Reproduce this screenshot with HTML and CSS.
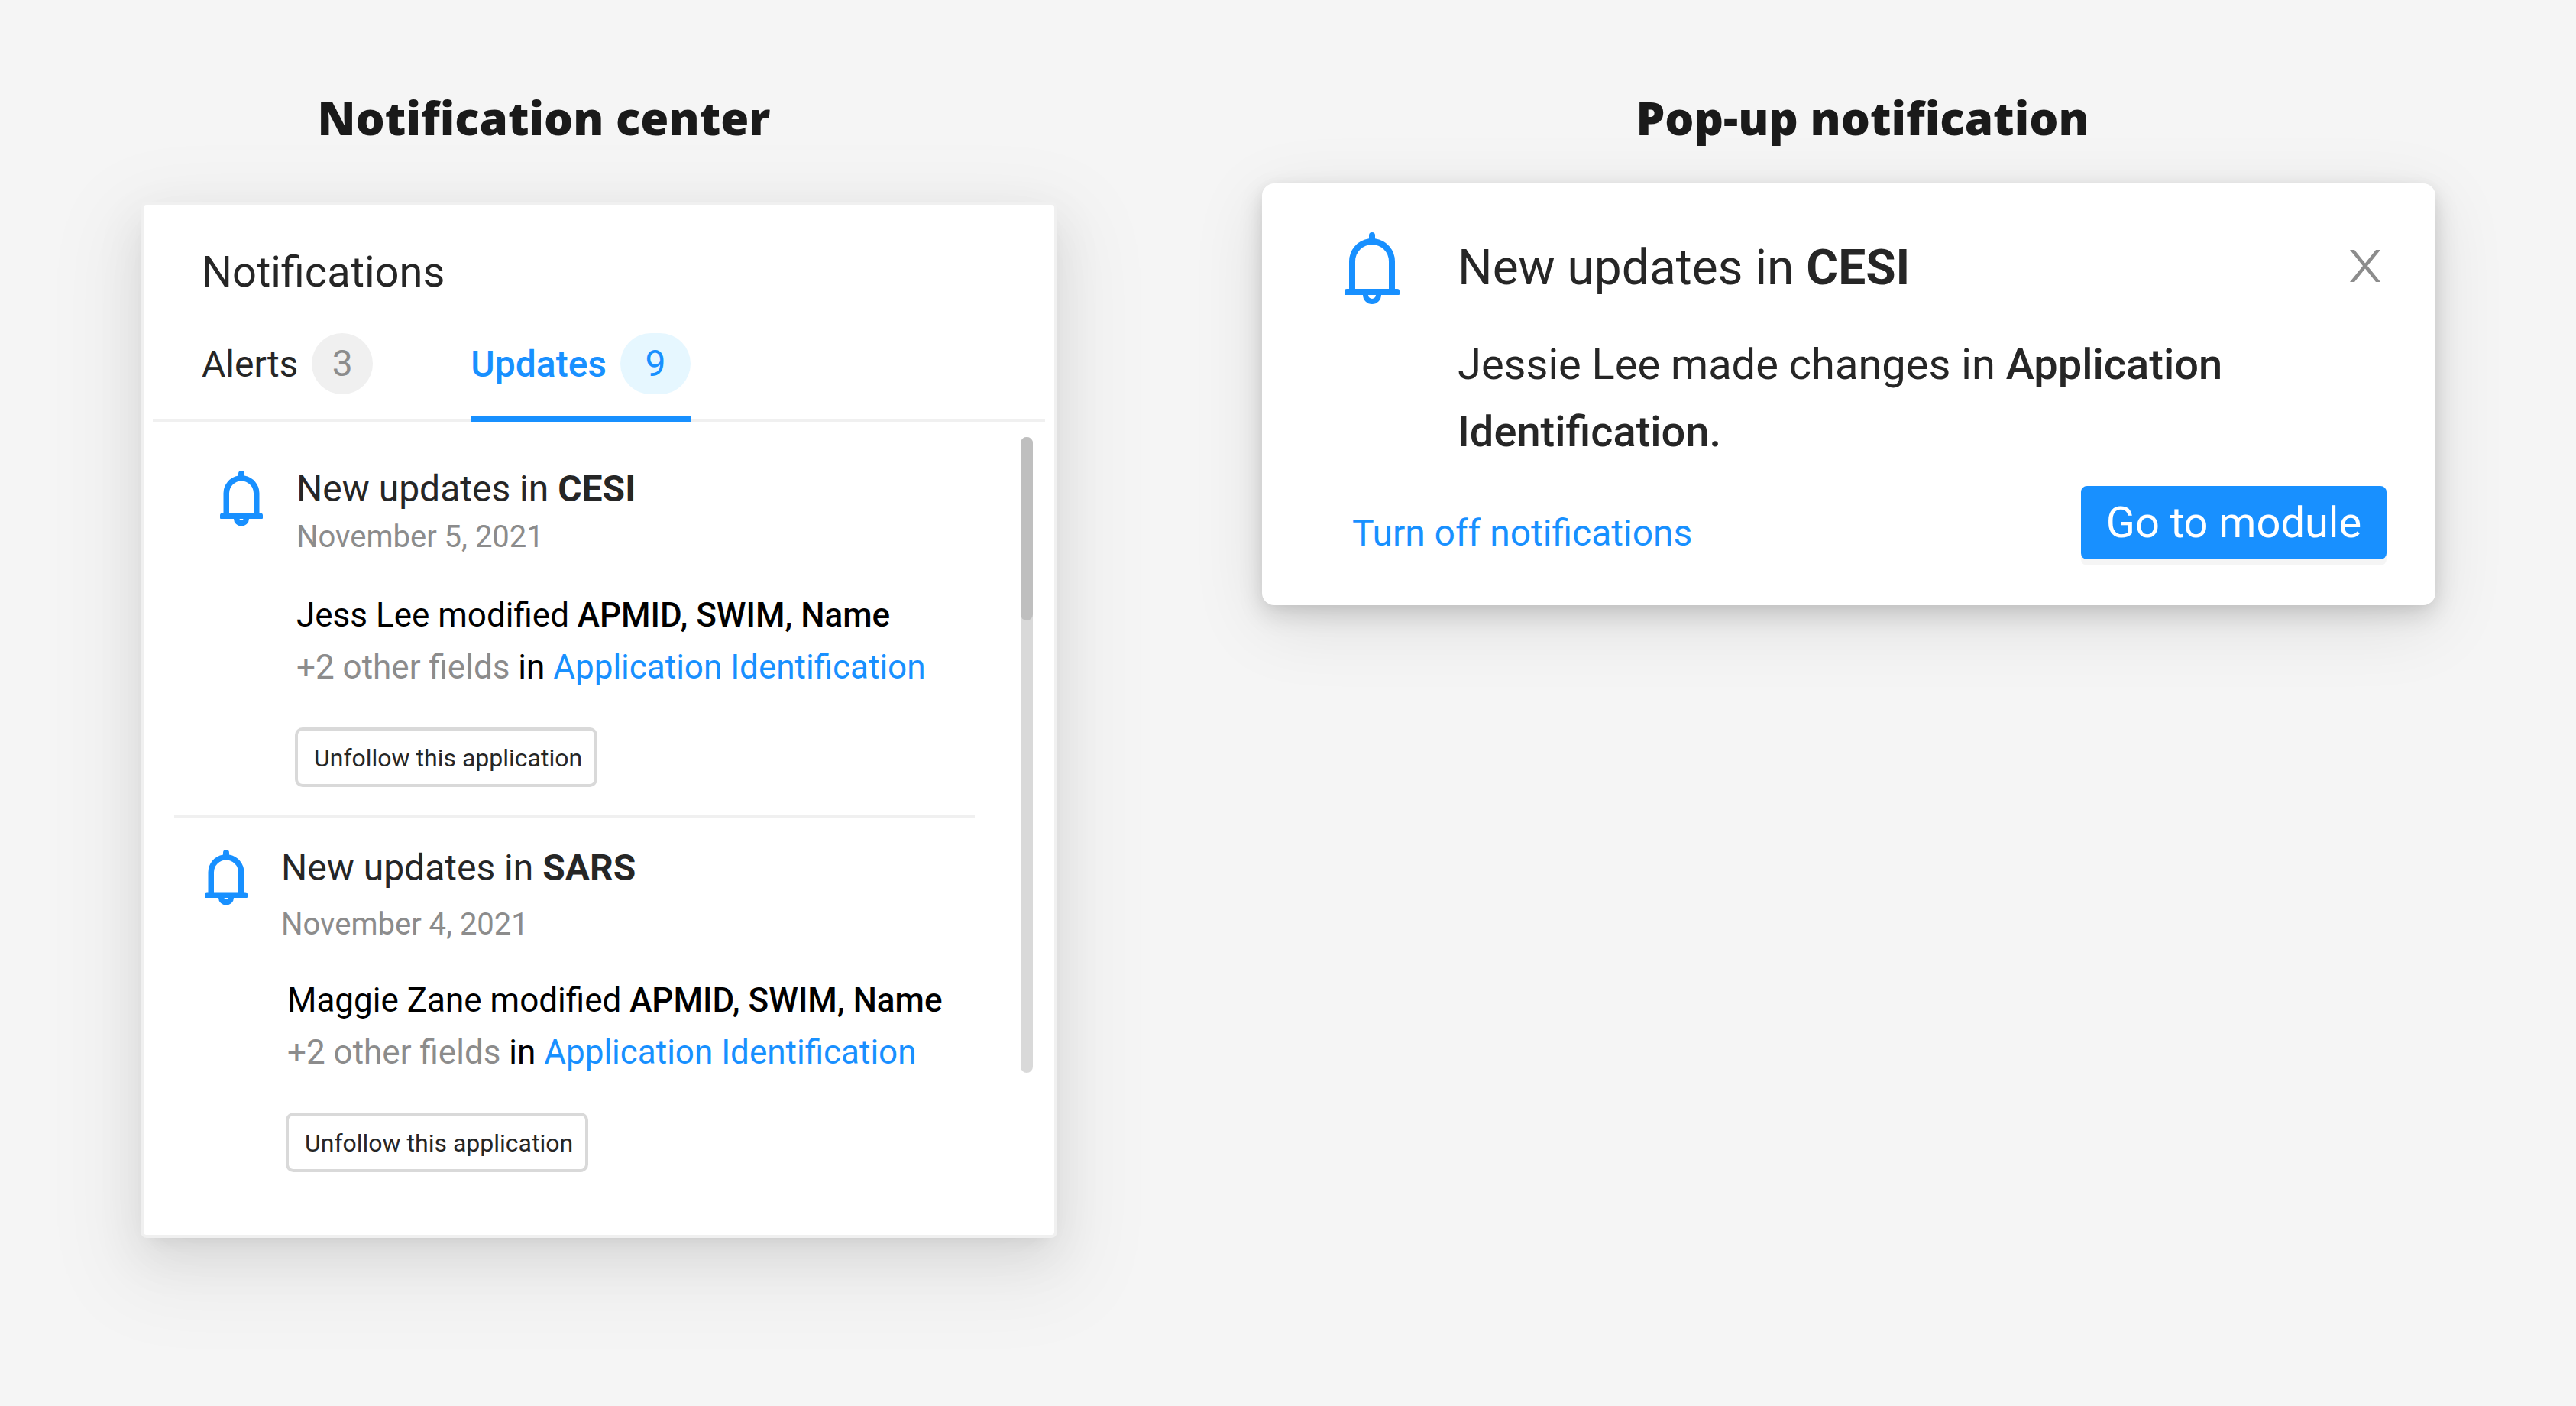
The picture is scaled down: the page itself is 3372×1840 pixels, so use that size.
FILE: index.html
```html
<!DOCTYPE html>
<html lang="en">
<head>
<meta charset="utf-8">
<meta name="viewport" content="width=device-width, initial-scale=1">
<title>Notifications</title>
<link rel="stylesheet" href="styles.css">
</head>
<body>
<svg class="sprite" aria-hidden="true">
  <symbol id="bell" viewBox="0 0 56 72">
    <path fill="currentColor" fill-rule="evenodd" d="M24 6.400V4a4 4 0 0 1 8 0v2.400A23.400 23.400 0 0 1 51.500 29.500v26H53a3 3 0 0 1 3 3V62a1 1 0 0 1-1 1H38a10 9.500 0 0 1-20 0H1a1 1 0 0 1-1-1v-3.500a3 3 0 0 1 3-3h1.500V29.500A23.400 23.400 0 0 1 24 6.400ZM12 55.500h32V29.500a16 16 0 0 0-32 0ZM25.500 63a2.500 2 0 0 0 5 0Z"/>
  </symbol>
  <symbol id="bell-thin" viewBox="0 0 72 94">
    <path fill="currentColor" fill-rule="evenodd" d="M32 8.200V4a4 4 0 0 1 8 0v4.200A30 30 0 0 1 66 38v36h3a3 3 0 0 1 3 3v4a1 1 0 0 1-1 1H48a12 12 0 0 1-24 0H1a1 1 0 0 1-1-1v-4a3 3 0 0 1 3-3h3V38A30 30 0 0 1 32 8.200ZM14 74h44V38a22 22 0 0 0-44 0ZM31 82a5 5 0 0 0 10 0Z"/>
  </symbol>
</svg>
<main class="page">
  <section class="column">
    <h1 class="heading heading-center">Notification center</h1>
    <div class="panel">
      <h2 class="panel-title">Notifications</h2>
      <div class="tabs" role="tablist">
        <button class="tab" role="tab" aria-selected="false">Alerts <span class="badge">3</span></button>
        <button class="tab tab-active" role="tab" aria-selected="true">Updates <span class="badge">9</span></button>
      </div>
      <div class="feed">
        <div class="items">
          <article class="item item-first">
            <svg class="bell"><use href="#bell"/></svg>
            <div class="item-content">
              <h3 class="item-title">New updates in <b>CESI</b></h3>
              <p class="date">November 5, 2021</p>
              <p class="change">Jess Lee modified <b>APMID, SWIM, Name</b><br><span class="muted">+2 other fields</span> in <a href="#">Application Identification</a></p>
              <button class="unfollow">Unfollow this application</button>
            </div>
          </article>
          <article class="item item-second">
            <svg class="bell"><use href="#bell"/></svg>
            <div class="item-content">
              <h3 class="item-title">New updates in <b>SARS</b></h3>
              <p class="date">November 4, 2021</p>
              <p class="change">Maggie Zane modified <b>APMID, SWIM, Name</b><br><span class="muted">+2 other fields</span> in <a href="#">Application Identification</a></p>
              <button class="unfollow">Unfollow this application</button>
            </div>
          </article>
        </div>
        <div class="scrollbar"><div class="thumb"></div></div>
      </div>
    </div>
  </section>
  <section class="column">
    <h1 class="heading heading-popup">Pop-up notification</h1>
    <div class="popup">
      <svg class="popup-bell"><use href="#bell-thin"/></svg>
      <div class="popup-content">
        <h2 class="popup-title">New updates in <b>CESI</b></h2>
        <p class="popup-text">Jessie Lee made changes in <b>Application</b> <b>Identification.</b></p>
      </div>
      <button class="close" aria-label="Close"><svg viewBox="0 0 40 42"><path fill="currentColor" d="M0 0H6L20 17.500 34 0H40L23 21 40 42H34L20 24.500 6 42H0L17 21Z"/></svg></button>
      <div class="popup-actions">
        <a class="turn-off" href="#">Turn off notifications</a>
        <button class="primary">Go to module</button>
      </div>
    </div>
  </section>
</main>
</body>
</html>
```
FILE: styles.css
```css
* {
  box-sizing: border-box;
}

body {
  margin: 0;
  background: #f5f5f5;
  color: #262626;
  font-family: Roboto, "Liberation Sans", sans-serif;
}

h1, h2, h3, p {
  margin: 0;
  font-weight: 400;
}

button {
  margin: 0;
  padding: 0;
  border: 0;
  background: none;
  color: inherit;
  font: inherit;
  cursor: pointer;
}

a {
  color: #1890ff;
  text-decoration: none;
}

.sprite {
  display: none;
}

.page {
  display: grid;
  grid-template-columns: 1200fr 1536fr;
  align-items: start;
  gap: 268px;
  min-height: 100vh;
  padding: 112px 184px 0;
}

.heading {
  color: #1a1a1a;
  font: 800 60px/84px "Open Sans", sans-serif;
  text-align: center;
  white-space: nowrap;
}

.heading-center {
  padding-right: 144px;
}

.heading-popup {
  padding-left: 36px;
}

/* Notification center */
.panel {
  margin-top: 68px;
  padding: 56px 12px 82px;
  border: 4px solid #f0f0f0;
  border-radius: 8px;
  background: #fff;
  box-shadow: 0 12px 24px -16px rgba(0, 0, 0, 0.12), 0 24px 64px rgba(0, 0, 0, 0.08), 0 36px 112px 32px rgba(0, 0, 0, 0.05);
}

.panel-title {
  padding-left: 64px;
  font-size: 56px;
  line-height: 64px;
}

.tabs {
  display: flex;
  gap: 128px;
  margin-top: 48px;
  padding-left: 64px;
  box-shadow: inset 0 -4px #f0f0f0;
}

.tab {
  display: flex;
  align-items: center;
  gap: 18px;
  height: 116px;
  padding-bottom: 36px;
  font-size: 48px;
  white-space: nowrap;
}

.tab-active {
  box-shadow: inset 0 -8px #1890ff;
  color: #1890ff;
  font-weight: 500;
}

.badge {
  min-width: 80px;
  border-radius: 40px;
  background: #f0f0f0;
  color: #8c8c8c;
  font-weight: 400;
  line-height: 80px;
  text-align: center;
}

.tab-active .badge {
  min-width: 92px;
  background: #e6f7ff;
  color: #1890ff;
}

.feed {
  display: flex;
  justify-content: space-between;
  padding: 20px 16px 0 28px;
}

.items {
  flex: 1;
  max-width: 1048px;
}

.item {
  display: flex;
  gap: 44px;
}

.item-first {
  padding: 44px 0 36px 60px;
  border-bottom: 4px solid #f0f0f0;
}

.item-second {
  padding: 42px 0 0 40px;
}

.bell {
  flex: none;
  width: 56px;
  height: 72px;
  color: #1890ff;
}

.item-title {
  font-size: 48px;
  line-height: 48px;
}

.item-title b,
.popup-title b {
  font-weight: 700;
}

.date {
  margin-top: 15px;
  color: #8c8c8c;
  font-size: 40px;
  line-height: 48px;
}

.change {
  margin-top: 44px;
  color: #000;
  font-size: 44px;
  line-height: 68px;
}

.change b,
.popup-text b {
  font-weight: 500;
}

.muted {
  color: #8c8c8c;
}

.item-second .date {
  margin-top: 26px;
}

.item-second .change {
  margin: 41px 0 0 8px;
}

.unfollow {
  height: 78px;
  margin: 45px 0 0 -2px;
  padding: 2px 16px 0 21px;
  border: 4px solid #d9d9d9;
  border-radius: 10px;
  background: #fff;
  font-size: 32px;
}

.item-second .unfollow {
  margin-left: 6px;
}

.scrollbar {
  width: 16px;
  height: 832px;
  border-radius: 8px;
  background: #d9d9d9;
}

.thumb {
  height: 240px;
  border-radius: 8px;
  background: #bfbfbf;
}

/* Pop-up notification */
.popup {
  display: grid;
  grid-template-columns: 72px 1fr 40px;
  column-gap: 76px;
  margin-top: 44px;
  padding: 64px 72px 60px 108px;
  border-radius: 16px;
  background: #fff;
  box-shadow: 0 2px 16px rgba(0, 0, 0, 0.04), 0 12px 32px rgba(0, 0, 0, 0.14), 0 24px 96px rgba(0, 0, 0, 0.1);
}

.popup-bell {
  width: 72px;
  height: 94px;
  color: #1890ff;
}

.popup-title {
  font-size: 64px;
  line-height: 94px;
}

.popup-text {
  max-width: 1060px;
  margin-top: 35px;
  font-size: 56px;
  line-height: 88px;
}

.close {
  height: 42px;
  margin-top: 23px;
  color: #8c8c8c;
}

.close svg {
  display: block;
  width: 40px;
  height: 42px;
}

.popup-actions {
  display: flex;
  grid-column: 1 / -1;
  align-items: center;
  justify-content: space-between;
  margin: 27px -8px 0 10px;
}

.turn-off {
  padding-top: 26px;
  font-size: 48px;
}

.primary {
  min-width: 400px;
  height: 96px;
  padding: 0 32px;
  border-radius: 8px;
  background: #1890ff;
  box-shadow: 0 8px rgba(0, 0, 0, 0.04);
  color: #fff;
  font-size: 56px;
}
```
